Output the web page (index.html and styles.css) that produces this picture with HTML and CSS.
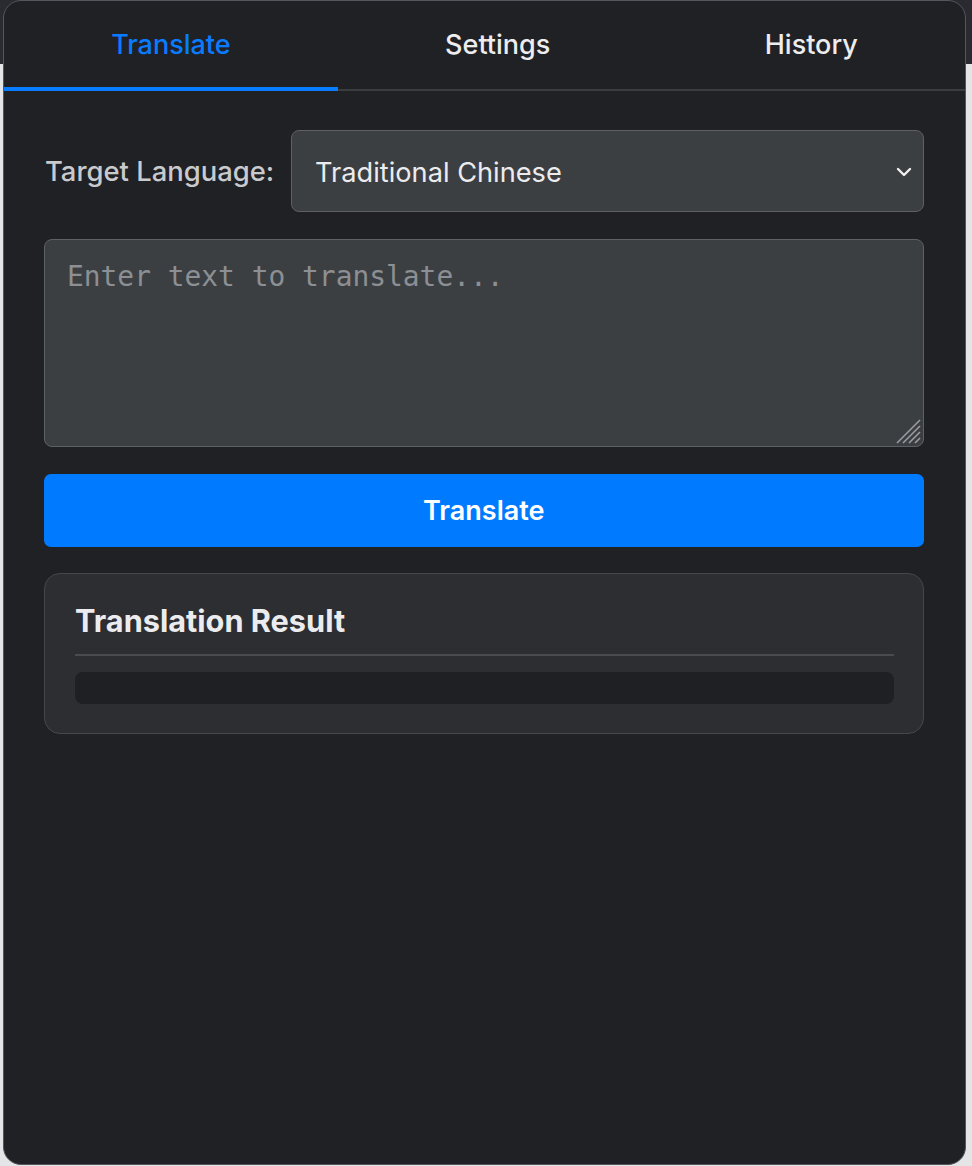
FILE: index.html
```html
<!DOCTYPE html>
<html lang="en">
<head>
<meta charset="utf-8">
<title>Translator</title>
<link rel="stylesheet" href="styles.css">
</head>
<body>
<div class="popup">
  <nav class="tabs">
    <div class="tab active">Translate</div>
    <div class="tab">Settings</div>
    <div class="tab">History</div>
  </nav>
  <main class="content">
    <div class="lang-row">
      <label class="lang-label">Target Language:</label>
      <div class="select">
        <span>Traditional Chinese</span>
        <svg class="chevron" width="16" height="12" viewBox="0 0 16 12"><path d="M2 3l6 6 6-6" fill="none" stroke="#f0f0f0" stroke-width="2.4" stroke-linecap="round" stroke-linejoin="round"/></svg>
      </div>
    </div>
    <div class="textarea">
      <span class="placeholder">Enter text to translate...</span>
      <svg class="grip" width="26" height="26" viewBox="0 0 26 26"><g stroke="#9a9ca0" stroke-width="1.6"><line x1="25" y1="2" x2="2" y2="25"/><line x1="25" y1="8" x2="8" y2="25"/><line x1="25" y1="14" x2="14" y2="25"/><line x1="25" y1="20" x2="20" y2="25"/></g></svg>
    </div>
    <button class="btn">Translate</button>
    <section class="card">
      <h3 class="card-title">Translation Result</h3>
      <div class="result"></div>
    </section>
  </main>
</div>
</body>
</html>
```
FILE: styles.css
```css
html, body {
  margin: 0;
  padding: 0;
}
body {
  width: 972px;
  height: 1166px;
  background: linear-gradient(to bottom, #2a2b30 0, #2a2b30 64px, #e4e5e7 64px);
  font-family: Inter, "Noto Sans", sans-serif;
  overflow: hidden;
}
.popup {
  box-sizing: border-box;
  margin-left: 3px;
  width: 963px;
  height: 1165px;
  background: #202125;
  border: 1.5px solid #55565d;
  border-radius: 18px;
  overflow: hidden;
}
.tabs {
  display: flex;
  height: 88px;
  border-bottom: 2px solid #3b3c3f;
}
.tab {
  flex: 1 1 auto;
  display: flex;
  align-items: center;
  justify-content: center;
  font-size: 27px;
  font-weight: 500;
  color: #ededf0;
  box-sizing: border-box;
  border-bottom: 4px solid transparent;
  margin-bottom: -2px;
}
.tab.active {
  color: #0a7cff;
  border-bottom-color: #0a7cff;
}
.content {
  padding: 39px 41.5px 0 40px;
  display: flex;
  flex-direction: column;
}
.lang-row {
  display: flex;
  align-items: center;
  gap: 17px;
  margin-bottom: 27px;
}
.lang-label {
  font-size: 27.4px;
  font-weight: 500;
  color: #c9cacd;
  white-space: nowrap;
  padding-left: 1px;
}
.select {
  flex: 1;
  height: 82px;
  box-sizing: border-box;
  background: #3c3f42;
  border: 1.5px solid #5d6064;
  border-radius: 8px;
  display: flex;
  align-items: center;
  justify-content: space-between;
  padding: 2px 11px 0 23px;
  font-size: 27.2px;
  color: #ececef;
}
.textarea {
  position: relative;
  height: 208px;
  box-sizing: border-box;
  background: #3c3f42;
  border: 1.5px solid #5d6064;
  border-radius: 8px;
  padding: 20px 22px;
  margin-bottom: 27px;
}
.placeholder {
  font-family: "DejaVu Sans Mono", "Liberation Mono", monospace;
  font-size: 27.9px;
  color: #8c8f93;
}
.grip {
  position: absolute;
  right: 2px;
  bottom: 2px;
}
.btn {
  height: 73px;
  border: none;
  border-radius: 7px;
  background: #007bff;
  color: #ffffff;
  font-family: Inter, "Noto Sans", sans-serif;
  font-size: 27px;
  font-weight: 600;
  margin-bottom: 26px;
}
.card {
  box-sizing: border-box;
  background: #2d2e31;
  border: 1.5px solid #46474b;
  border-radius: 16px;
  padding: 28px 29px 29px 30px;
}
.card-title {
  margin: 0;
  font-size: 30.7px;
  font-weight: 700;
  color: #ececef;
  padding-bottom: 15px;
  border-bottom: 2px solid #4a4b4f;
  margin-bottom: 16px;
}
.result {
  height: 32px;
  background: #1f2023;
  border-radius: 8px;
}
```
